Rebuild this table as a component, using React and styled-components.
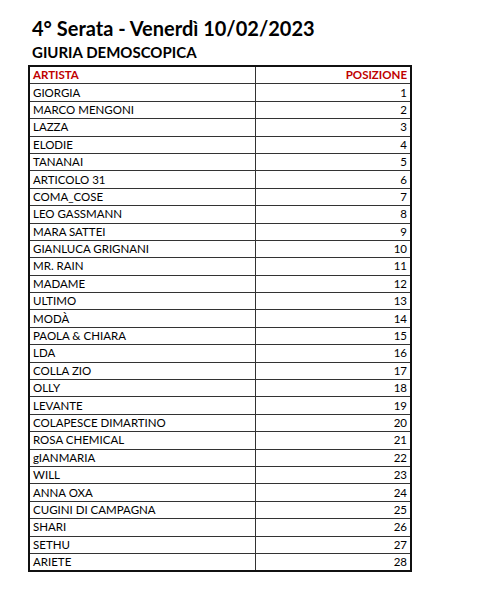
import React from 'react';
import styled, { createGlobalStyle } from 'styled-components';

const GlobalStyle = createGlobalStyle`
  html, body {
    margin: 0;
    padding: 0;
    background: #fff;
  }
  body {
    font-family: Lato, "Open Sans", sans-serif;
    color: #000;
  }
`;

const StyledPage = styled.div`
  padding: 16px 0 0 28px;
  width: 382px;
`;

const StyledTitle = styled.h1`
  margin: 0 0 0 4px;
  font-size: 20px;
  line-height: 24px;
  font-weight: 700;
`;

const StyledSubtitle = styled.h2`
  margin: 3px 0 0 4px;
  font-size: 15px;
  line-height: 19px;
  font-weight: 700;
`;

const StyledTable = styled.table`
  margin-top: 3px;
  width: 382px;
  border-collapse: collapse;
  border: 2px solid #111;
  table-layout: fixed;
`;

const StyledCell = styled.td`
  height: 16.4px;
  padding: 0 3px;
  border: 1px solid #333;
  font-size: 11.5px;
  line-height: 16px;
  white-space: nowrap;
  text-align: ${(p) => (p.$right ? 'right' : 'left')};
  color: ${(p) => (p.$head ? '#c00000' : '#000')};
  font-weight: ${(p) => (p.$head ? 700 : 400)};
`;

const artists = [
  'GIORGIA',
  'MARCO MENGONI',
  'LAZZA',
  'ELODIE',
  'TANANAI',
  'ARTICOLO 31',
  'COMA_COSE',
  'LEO GASSMANN',
  'MARA SATTEI',
  'GIANLUCA GRIGNANI',
  'MR. RAIN',
  'MADAME',
  'ULTIMO',
  'MODÀ',
  'PAOLA & CHIARA',
  'LDA',
  'COLLA ZIO',
  'OLLY',
  'LEVANTE',
  'COLAPESCE DIMARTINO',
  'ROSA CHEMICAL',
  'gIANMARIA',
  'WILL',
  'ANNA OXA',
  'CUGINI DI CAMPAGNA',
  'SHARI',
  'SETHU',
  'ARIETE',
];

const App = () => {
  return (
    <>
      <GlobalStyle />
      <StyledPage>
        <StyledTitle>4° Serata - Venerdì 10/02/2023</StyledTitle>
        <StyledSubtitle>GIURIA DEMOSCOPICA</StyledSubtitle>
        <StyledTable>
          <colgroup>
            <col style={{ width: '226px' }} />
            <col style={{ width: '156px' }} />
          </colgroup>
          <tbody>
            <tr>
              <StyledCell $head>ARTISTA</StyledCell>
              <StyledCell $head $right>
                POSIZIONE
              </StyledCell>
            </tr>
            {artists.map((name, idx) => (
              <tr key={idx}>
                <StyledCell>{name}</StyledCell>
                <StyledCell $right>{idx + 1}</StyledCell>
              </tr>
            ))}
          </tbody>
        </StyledTable>
      </StyledPage>
    </>
  );
};

export default App;
